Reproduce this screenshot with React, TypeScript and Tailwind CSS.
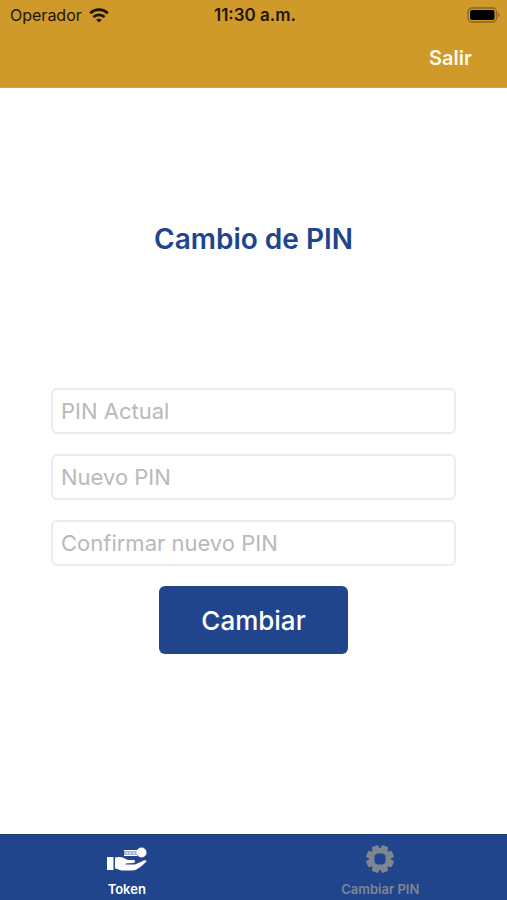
import React, { useState } from 'react';

interface PinFieldProps {
  id: string;
  label: string;
  value: string;
  onChange: (value: string) => void;
}

const PinField: React.FC<PinFieldProps> = ({ id, label, value, onChange }) => (
  <input
    id={id}
    type="password"
    inputMode="numeric"
    aria-label={label}
    placeholder={label}
    value={value}
    onChange={(e) => onChange(e.target.value)}
    className="block w-full h-[46px] px-2 rounded-md border-2 border-[#ececec] bg-white text-[22px] text-gray-800 placeholder:text-[#b9b9bb] outline-none focus:border-[#21458d]"
  />
);

const WifiIcon = () => (
  <svg width="20" height="15" viewBox="0 0 20 15" fill="none" stroke="currentColor" strokeWidth="2.8" aria-hidden="true">
    <path d="M1.2 5.2C6.2.5 13.8.5 18.8 5.2" />
    <path d="M4.4 9c3.200-2.900 8-2.900 11.200 0" />
    <path d="M7.200 11.800c1.600-1.400 4-1.400 5.600 0L10 14.600z" fill="currentColor" stroke="none" />
  </svg>
);

const BatteryIcon = () => (
  <svg width="33" height="16" viewBox="0 0 33 16" aria-hidden="true">
    <rect x="1" y="1" width="28.500" height="14" rx="4" fill="none" stroke="#8c681a" strokeWidth="1.400" />
    <rect x="3" y="3" width="24.500" height="10" rx="2" fill="#000" />
    <path d="M31 6c2 .6 2 3.400 0 4z" fill="#8c681a" />
  </svg>
);

const TokenIcon = () => (
  <svg width="40" height="26" viewBox="0 0 40 26" fill="currentColor" aria-hidden="true">
    <path d="M0 10h6.500v13H0z" />
    <path d="M8 10.500c2.500-.8 6-.8 8.500.3 1.700.8 3 2 5 2.200h5c2 0 2.200 2.600.2 2.900l-8.200.5v1.200h9.500c3-1 6-2.800 8.500-4 2-.9 3.600.1 2.500 1.500-2.600 2.800-6.500 5.800-9.500 7.500-1.500.8-3 1-5 1H15c-2.500 0-4.500-2-7-2z" />
    <circle cx="34.500" cy="5.500" r="5" />
    <path d="M17 3h13v6H17z" opacity="0.6" />
    <path d="M17 3.500h13M17 8.500h13M19 6h2m1.500 0h2m1.500 0h2" stroke="currentColor" strokeWidth="1.200" />
  </svg>
);

const TEETH = [0, 45, 90, 135, 180, 225, 270, 315];

const GearIcon = () => (
  <svg width="28" height="28" viewBox="0 0 28 28" fill="currentColor" aria-hidden="true">
    {TEETH.map((angle) => (
      <rect key={angle} x="10.400" y="0" width="7.200" height="6" rx="1.800" transform={`rotate(${angle + 22.5} 14 14)`} />
    ))}
    <path
      fillRule="evenodd"
      d="M14 3a11 11 0 1 0 0 22 11 11 0 0 0 0-22zm-2 5.500h4c2 0 3.500 1.500 3.500 3.500v4c0 2-1.500 3.500-3.500 3.500h-4c-2 0-3.500-1.500-3.500-3.500v-4c0-2 1.500-3.500 3.500-3.500z"
    />
  </svg>
);

const App: React.FC = () => {
  const [current, setCurrent] = useState('');
  const [next, setNext] = useState('');
  const [confirm, setConfirm] = useState('');

  return (
    <div className="min-h-screen flex flex-col bg-white font-['Inter',sans-serif]">
      <header className="bg-[#cf9a29] border-b border-[#c5a564]">
        <div className="grid grid-cols-3 items-center h-7 pl-[10px] pr-[7px] pt-0.5 text-[#1d1607]">
          <div className="flex items-center gap-[7px] text-base">
            <span>Operador</span>
            <WifiIcon />
          </div>
          <span className="text-center text-[17px] leading-6 font-semibold whitespace-nowrap">11:30 a.m.</span>
          <div className="flex justify-end">
            <BatteryIcon />
          </div>
        </div>
        <div className="flex justify-end items-center h-[59px] pr-[35px]">
          <button type="button" className="text-xl leading-6 font-semibold text-[#fff9e8]">Salir</button>
        </div>
      </header>

      <main className="flex-1 px-[51px] pt-[131px]">
        <h1 className="text-center text-[28px] leading-10 font-semibold text-[#21458d]">Cambio de PIN</h1>
        <form className="mt-[129px] flex flex-col gap-5" onSubmit={(e) => e.preventDefault()}>
          <PinField id="pin-actual" label="PIN Actual" value={current} onChange={setCurrent} />
          <PinField id="pin-nuevo" label="Nuevo PIN" value={next} onChange={setNext} />
          <PinField id="pin-confirmar" label="Confirmar nuevo PIN" value={confirm} onChange={setConfirm} />
          <button
            type="submit"
            className="self-center w-[189px] h-[68px] rounded-md bg-[#21458d] text-[26px] font-medium text-white"
          >
            Cambiar
          </button>
        </form>
      </main>

      <nav className="grid grid-cols-2 h-[66px] bg-[#21458d] border-t border-[#193979] text-[13px] leading-4 font-semibold">
        <button type="button" className="flex flex-col items-center justify-end gap-2 pb-[3px] text-white">
          <TokenIcon />
          <span>Token</span>
        </button>
        <button type="button" className="flex flex-col items-center justify-end gap-2 pb-[3px] text-[#7f868f]">
          <GearIcon />
          <span>Cambiar PIN</span>
        </button>
      </nav>
    </div>
  );
};

export default App;
